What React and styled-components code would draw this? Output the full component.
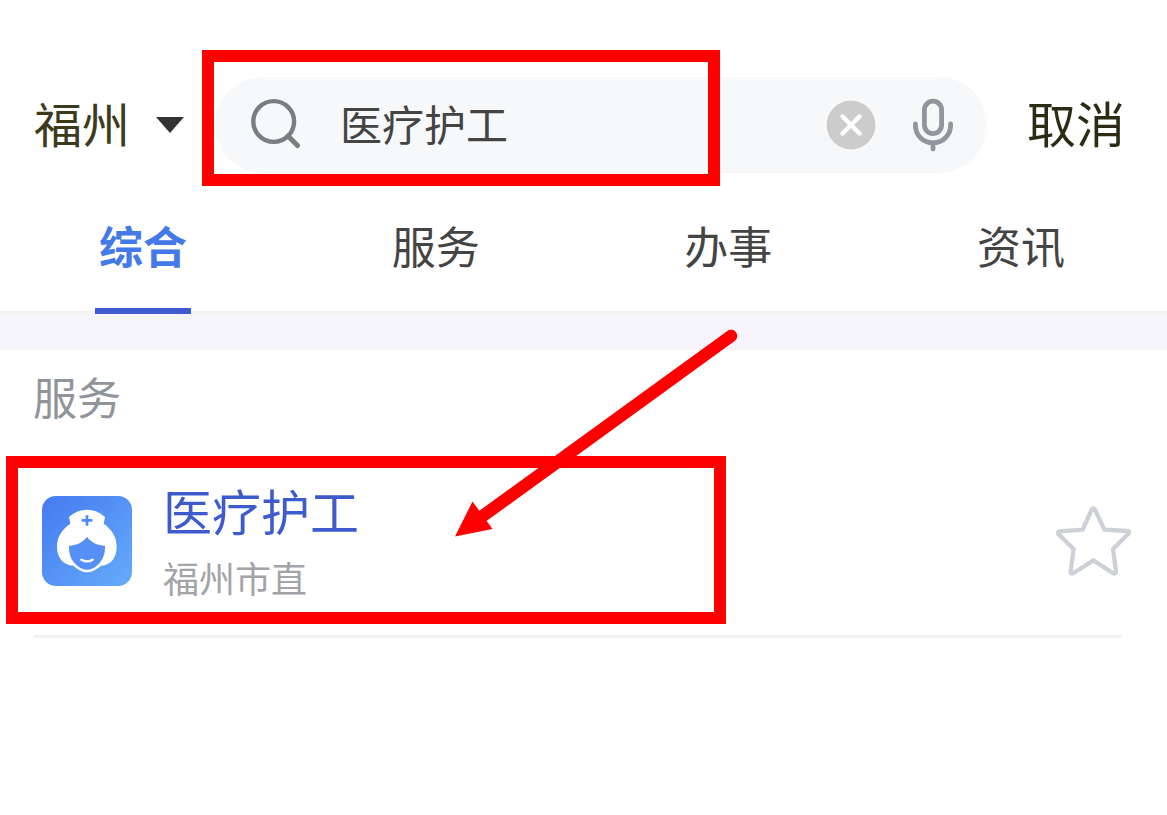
import React, { useState } from "react";
import styled, { createGlobalStyle } from "styled-components";

const tabs = ["综合", "服务", "办事", "资讯"];

const App = () => {
    const [keyword, setKeyword] = useState("医疗护工");
    const [active, setActive] = useState("综合");

    return (
        <Wrap>
            <GlobalStyle />
            <Header>
                <City type="button">
                    <CityName>福州</CityName>
                    <svg width="28" height="16" viewBox="0 0 28 16" aria-hidden="true">
                        <path d="M0 0H28L14 16Z" fill="#333" />
                    </svg>
                </City>
                <SearchBox role="search">
                    <svg width="52" height="54" viewBox="0 0 52 54" fill="none" stroke="#7b7d80" aria-hidden="true">
                        <circle cx="23.7" cy="23.5" r="20.4" strokeWidth="4.4" />
                        <path d="M38 38L47.5 47.5" strokeWidth="5" strokeLinecap="round" />
                    </svg>
                    <SearchInput
                        type="text"
                        aria-label="搜索"
                        value={keyword}
                        onChange={(e) => setKeyword(e.target.value)}
                    />
                    <IconButton type="button" aria-label="清空" onClick={() => setKeyword("")}>
                        <svg width="50" height="50" viewBox="0 0 50 50">
                            <circle cx="25" cy="25" r="24.4" fill="#ccc" />
                            <path d="M16.5 16.5L33.5 33.5M33.5 16.5L16.5 33.5" stroke="#fff" strokeWidth="4.4" strokeLinecap="round" />
                        </svg>
                    </IconButton>
                    <IconButton type="button" aria-label="语音">
                        <svg width="42" height="54" viewBox="0 0 42 54" fill="none" stroke="#93959c" strokeWidth="4.8" strokeLinecap="round">
                            <rect x="12.4" y="3.2" width="17.2" height="32.4" rx="8.6" />
                            <path d="M3.4 26V27.5C3.4 37 11 44.8 21 44.8S38.6 37 38.6 27.5V26M21 45V51" />
                        </svg>
                    </IconButton>
                </SearchBox>
                <Cancel type="button">取消</Cancel>
            </Header>

            <TabList role="tablist">
                {tabs.map((tab) => (
                    <Tab
                        key={tab}
                        type="button"
                        role="tab"
                        aria-selected={tab === active}
                        $active={tab === active}
                        onClick={() => setActive(tab)}
                    >
                        {tab}
                    </Tab>
                ))}
            </TabList>
            <Band />

            <Section>
                <SectionTitle>服务</SectionTitle>
                <Item>
                    <NurseIcon />
                    <ItemText>
                        <ItemLink href="#">医疗护工</ItemLink>
                        <ItemArea>福州市直</ItemArea>
                    </ItemText>
                    <IconButton type="button" aria-label="收藏">
                        <svg width="75" height="70" viewBox="48 53 225 210" fill="none" stroke="#cdd1d7" strokeWidth="13" strokeLinejoin="round">
                            <path d="M155 64Q160 56 165 64L193 124L263 128Q271 129 265 136L219 182L228 249Q228 259 219 254L160 216L101 254Q91 259 92 249L101 182L56 138Q51 130 59 129L128 124Z" />
                        </svg>
                    </IconButton>
                </Item>
                <Divider />
            </Section>

            <SearchMark />
            <ItemMark />
            <Arrow width="284" height="210" viewBox="0 0 284 210" aria-hidden="true">
                <path d="M277 7L26 189" stroke="#f00" strokeWidth="12.5" strokeLinecap="round" />
                <path d="M1 207.5L18.5 172.5L38.5 200Z" fill="#f00" />
            </Arrow>
        </Wrap>
    );
};

const NurseIcon = () => (
    <svg width="90" height="90" viewBox="0 0 270 270" aria-hidden="true">
        <defs>
            <linearGradient id="nurse" x1="0" y1="0" x2="1" y2="1">
                <stop offset="0" stopColor="#457af0" />
                <stop offset="1" stopColor="#65acfb" />
            </linearGradient>
        </defs>
        <rect width="270" height="270" rx="42" fill="url(#nurse)" />
        <path
            d="M81 63Q105 41 135 41T189 63L185 83C208 99 224 122 224 151C224 187 206 208 178 209C164 219 151 229 135 229S106 219 94 209C64 208 45 187 45 151C45 122 61 99 85 83Z"
            fill="#fff"
        />
        {/* face */}
        <path
            d="M135 122C146 138 165 148 189 149C190 170 184 187 173 201C162 214 149 221 135 221S108 214 97 201C86 187 80 170 81 149C104 148 124 138 135 122Z"
            fill="#568ff5"
        />
        <path d="M135 58V89M119 73H151" stroke="#4f8bf4" strokeWidth="8" />
        <path d="M118 191Q135 201 152 191" fill="none" stroke="#fff" strokeWidth="7" strokeLinecap="round" />
    </svg>
);

const GlobalStyle = createGlobalStyle`
* {
box-sizing:border-box;
}
body {
margin:0;
background-color:#fff;
font-family:"Noto Sans CJK SC", sans-serif;
}
button {
padding:0;
border:0;
background:none;
font-family:inherit;
cursor:pointer;
}
svg {
display:block;
flex:none;
}
`

const Wrap = styled.div`
position:relative;
overflow:hidden;
`

const Header = styled.header`
display:flex;
align-items:center;
padding:77px 42px 0 34px;
`

const City = styled.button`
display:flex;
align-items:center;
gap:26px;
margin-right:31px;
color:#3d3a1c;
font-size:48px;
line-height:64px;
`

const CityName = styled.span`
padding-bottom:6px;
`

const SearchBox = styled.div`
display:flex;
flex:1;
align-items:center;
min-width:0;
height:96px;
padding:0 33px 0 35px;
border-radius:48px;
background-color:#f7f8fa;
`

const SearchInput = styled.input`
flex:1;
min-width:0;
height:72px;
margin-left:38px;
padding:0 0 6px;
border:0;
outline:0;
background:none;
color:#444;
font-family:inherit;
font-size:42px;
`

const IconButton = styled.button`
flex:none;

& + & {
margin-left:36px;
}
`

const Cancel = styled.button`
margin-left:40px;
padding-bottom:6px;
color:#2d2b14;
font-size:49px;
line-height:64px;
`

const TabList = styled.div`
display:flex;
justify-content:space-between;
height:141px;
padding:0 98px 0 95px;
border-bottom:3px solid #f2f2f2;
`

const Tab = styled.button`
width:96px;
height:141px;
padding:8px 0 ${(props) => (props.$active ? "0" : "6px")};
border-bottom:${(props) => (props.$active ? "6px solid #3d5bcc" : "0")};
color:${(props) => (props.$active ? "#4479e8" : "#444")};
font-size:44px;
font-weight:${(props) => (props.$active ? 700 : 400)};
line-height:64px;
`

const Band = styled.div`
height:36px;
background-color:#f4f4fa;
`

const Section = styled.section`
padding:14px 36px 0 33px;
`

const SectionTitle = styled.h2`
margin:0;
color:#909399;
font-size:44px;
font-weight:400;
line-height:64px;
`

const Item = styled.div`
display:flex;
align-items:center;
gap:31px;
margin-top:22px;
padding:30px 0 34px 9px;
`

const ItemText = styled.div`
display:flex;
flex:1;
flex-direction:column;
gap:13px;
`

const ItemLink = styled.a`
color:#3d5bcc;
font-size:49px;
line-height:60px;
text-decoration:none;
`

const ItemArea = styled.span`
color:#a2a4a9;
font-size:36px;
line-height:48px;
`

const Divider = styled.hr`
height:3px;
margin:0 9px 0 0;
border:0;
background-color:#f2f2f2;
`

const Mark = styled.div`
position:absolute;
border:12px solid #f00;
pointer-events:none;
`

const SearchMark = styled(Mark)`
top:50px;
left:202px;
width:518px;
height:136px;
`

const ItemMark = styled(Mark)`
top:456px;
left:6px;
width:720px;
height:168px;
`

const Arrow = styled.svg`
position:absolute;
top:329px;
left:454px;
fill:none;
pointer-events:none;
`

export default App;
